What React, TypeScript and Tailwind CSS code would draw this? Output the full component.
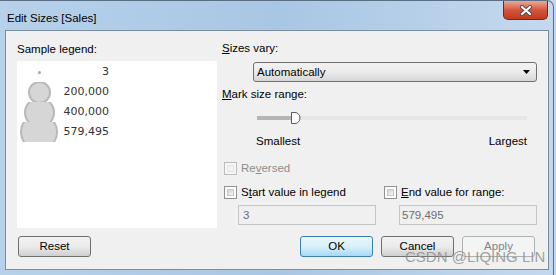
import React from 'react';

const ui = "font-['Liberation_Sans',Arial,sans-serif]";

function Check({ disabled = false }: { disabled?: boolean }) {
  return (
    <span
      className={`inline-block w-[13px] h-[13px] border p-[2px] ${
        disabled ? 'border-[#bcbcbc] bg-[#f6f6f6]' : 'border-[#8e8f8f] bg-white'
      }`}
    >
      <span
        className={`block w-full h-full border ${
          disabled
            ? 'border-[#e4e4e4] bg-[#f2f2f2]'
            : 'border-[#c9c9c9] bg-gradient-to-br from-[#cfcfcf] to-[#f7f7f7]'
        }`}
      />
    </span>
  );
}

function Btn({
  children,
  kind = 'normal',
  className = '',
}: {
  children: React.ReactNode;
  kind?: 'normal' | 'default' | 'disabled';
  className?: string;
}) {
  const look =
    kind === 'default'
      ? 'border-[#3c7fb1] bg-gradient-to-b from-[#eaf6fd] via-[#d9f0fc] to-[#a7d9f5] text-black'
      : kind === 'disabled'
      ? 'border-[#adb2b5] bg-[#f4f4f4] text-[#838383]'
      : 'border-[#707070] bg-gradient-to-b from-[#f2f2f2] via-[#ebebeb] to-[#cfcfcf] text-black';
  return (
    <button
      className={`h-[21px] w-[73px] rounded-[3px] border leading-[19px] text-[11.5px] ${look} ${className}`}
    >
      {children}
    </button>
  );
}

const legend = [
  { label: '3', size: 3 },
  { label: '200,000', size: 23 },
  { label: '400,000', size: 31 },
  { label: '579,495', size: 38 },
];

export default function App() {
  return (
    <div
      className={`relative w-[556px] h-[275px] overflow-hidden bg-gradient-to-r from-[#b7d1ea] via-[#a9c6e4] to-[#c4d9ee] ${ui} text-[11.5px] text-black`}
    >
      <div className="w-[554px] h-full border-t border-r border-[#5b6f84] rounded-tr-[7px] flex flex-col">
        {/* title bar */}
        <div className="h-[29px] flex items-start">
          <div className="pl-[7px] pt-[9px] text-[11.5px] leading-[16px] text-black">Edit Sizes [Sales]</div>
          <div className="ml-auto mr-[5px] w-[45px] h-[19px] rounded-b-[5px] border border-t-0 border-[#6f2b20] bg-gradient-to-b from-[#e9a898] via-[#d4553c] to-[#c2391f] flex items-center justify-center">
            <svg width="14" height="11" viewBox="0 0 14 11">
              <path d="M3 2 L11 9 M11 2 L3 9" stroke="#4a4a4a" strokeWidth="4" strokeLinecap="round" />
              <path d="M3 2 L11 9 M11 2 L3 9" stroke="#ffffff" strokeWidth="2.2" strokeLinecap="round" />
            </svg>
          </div>
        </div>

        {/* client area */}
        <div className="ml-[5px] mr-[4px] h-[240px] border border-[#7a8ea3] bg-[#f0f0f0] flex flex-col">
          <div className="h-[197px] flex">
            {/* left: sample legend */}
            <div className="ml-[11px] w-[200px] pt-[10px]">
              <div className="leading-[16px]">Sample legend:</div>
              <div className="mt-[4px] h-[167px] bg-white pt-[1px]">
                {legend.map((l) => (
                  <div key={l.label} className="h-[20px] flex items-center">
                    <div className="w-[44px] h-[20px] overflow-hidden flex items-center justify-center">
                      <span
                        className="shrink-0 rounded-full bg-[#d6d6d6] border-2 border-[#b9b9b9]"
                        style={{ width: l.size, height: l.size, borderWidth: l.size < 5 ? 0 : undefined, backgroundColor: l.size < 5 ? '#a8a8a8' : undefined }}
                      />
                    </div>
                    <div className="w-[48px] text-right font-['DejaVu_Sans',sans-serif] text-[11px] leading-[20px] text-[#333]">{l.label}</div>
                  </div>
                ))}
              </div>
            </div>

            {/* right: options */}
            <div className="ml-[5px] w-[315px] pt-[9px]">
              <div className="leading-[16px]">
                <span className="underline">S</span>izes vary:
              </div>
              <div className="mt-[6px] ml-[31px] w-[284px] h-[20px] rounded-[3px] border border-[#707070] bg-gradient-to-b from-[#f2f2f2] via-[#ebebeb] to-[#d6d6d6] flex items-center pl-[3px] pr-[6px]">
                <span className="leading-[16px]">Automatically</span>
                <svg className="ml-auto" width="7" height="4" viewBox="0 0 7 4">
                  <path d="M0 0 H7 L3.5 4 Z" fill="#000" />
                </svg>
              </div>
              <div className="mt-[4px] leading-[16px]">
                <span className="underline">M</span>ark size range:
              </div>
              <div className="mt-[4px] ml-[35px] w-[270px] h-[24px] relative flex items-center">
                <div className="h-[4px] w-[34px] bg-[#b5b5b5]" />
                <div className="h-[4px] flex-1 bg-[#e6e6e6]" />
                <svg className="absolute left-[34px] top-[6px]" width="10" height="12" viewBox="0 0 10 12">
                  <path d="M0.5 0.5 H4 A5 5.5 0 0 1 4 11.5 H0.5 Z" fill="#fff" stroke="#5a5a5a" />
                </svg>
              </div>
              <div className="mt-[3px] ml-[34px] w-[271px] flex leading-[16px]">
                <span>Smallest</span>
                <span className="ml-auto">Largest</span>
              </div>
              <div className="mt-[11px] ml-[2px] flex items-center gap-[4px] leading-[16px] text-[#8d8d8d]">
                <Check disabled />
                <span>
                  Re<span className="underline">v</span>ersed
                </span>
              </div>
              <div className="mt-[8px] flex leading-[16px]">
                <div className="w-[162px] pl-[2px] flex items-center gap-[4px]">
                  <Check />
                  <span>
                    S<span className="underline">t</span>art value in legend
                  </span>
                </div>
                <div className="flex items-center gap-[4px]">
                  <Check />
                  <span>
                    <span className="underline">E</span>nd value for range:
                  </span>
                </div>
              </div>
              <div className="mt-[5px] flex">
                <div className="ml-[16px] w-[138px] h-[20px] border border-[#c2c6c9] bg-[#f0f0f0] pl-[4px] leading-[18px] text-[#6d6d6d]">
                  3
                </div>
                <div className="ml-[23px] w-[138px] h-[20px] border border-[#c2c6c9] bg-[#f0f0f0] pl-[2px] leading-[18px] text-[#6d6d6d]">
                  579,495
                </div>
              </div>
            </div>
          </div>

          {/* buttons */}
          <div className="mt-[8px] flex pl-[12px] pr-[13px]">
            <Btn>Reset</Btn>
            <Btn kind="default" className="ml-auto">OK</Btn>
            <Btn className="ml-[8px]">Cancel</Btn>
            <Btn kind="disabled" className="ml-[8px]">Apply</Btn>
          </div>
        </div>
      </div>

      {/* watermark */}
      <div className="absolute left-[405px] top-[248px] text-[15px] leading-[18px] text-[#8a8a8a]/80 font-['Liberation_Sans',Arial,sans-serif] pointer-events-none">
        CSDN @LIQING LIN
      </div>
    </div>
  );
}
